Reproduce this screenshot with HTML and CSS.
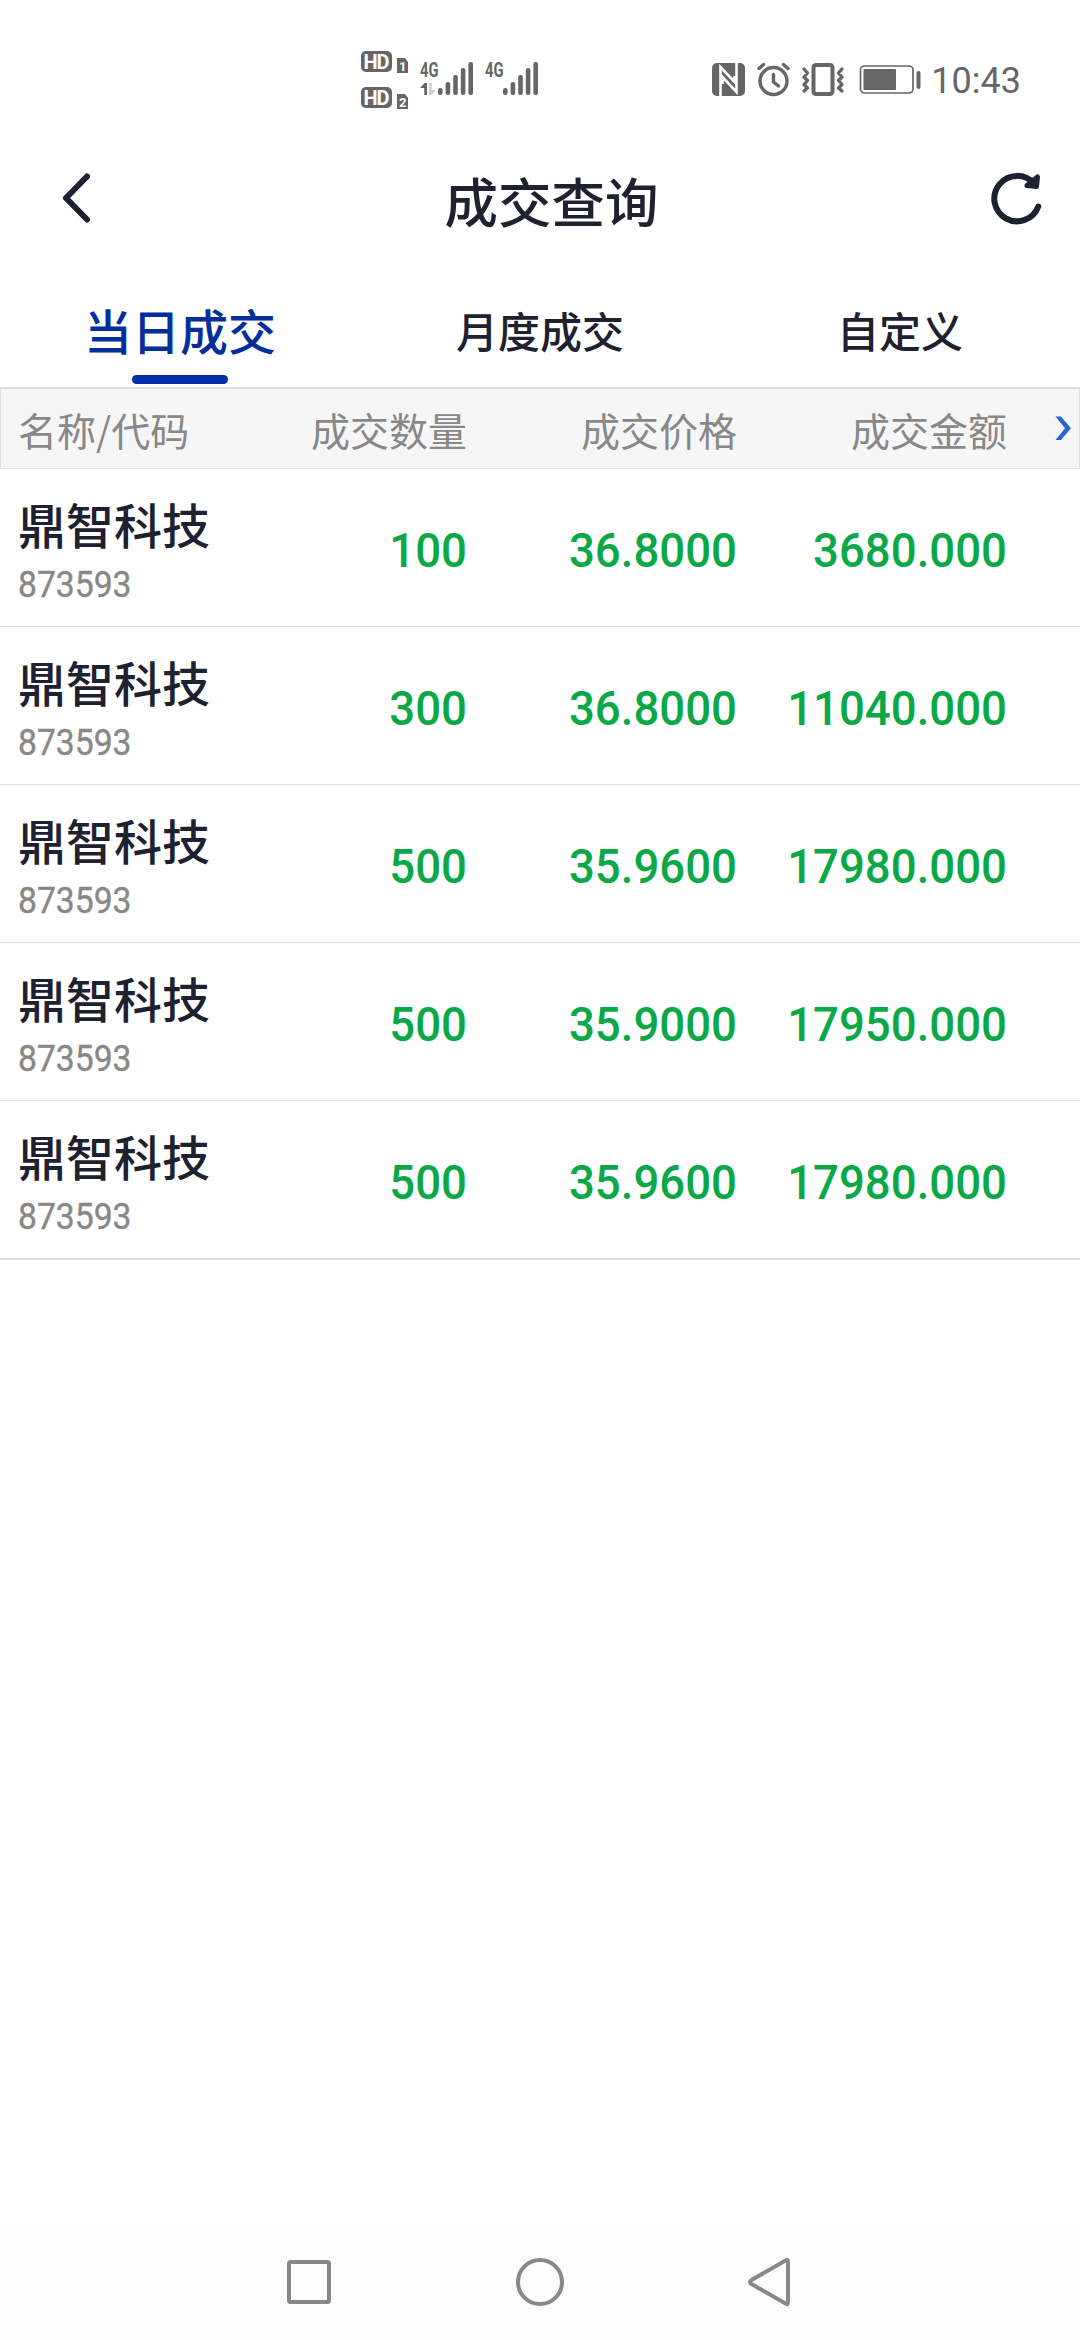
FILE: index.html
```html
<!DOCTYPE html>
<html lang="zh-CN">
<head>
<meta charset="utf-8">
<title>成交查询</title>
<link rel="stylesheet" href="styles.css">
</head>
<body>
<div class="screen">
  <div class="status">
    <svg class="signals" width="180" height="60" viewBox="360 50 180 60">
      <g class="ink">
        <rect x="361" y="51" width="31" height="21" rx="5"/>
        <rect x="361" y="87" width="31" height="21" rx="5"/>
        <path d="M397 58h8l3 4v11h-11zM397 94h8l3 4v11h-11z"/>
        <rect x="438" y="88" width="4.6" height="7" rx="2.2"/>
        <rect x="445.6" y="82" width="4.6" height="13" rx="2"/>
        <rect x="453.2" y="75" width="4.6" height="20" rx="2"/>
        <rect x="460.8" y="68" width="4.6" height="27" rx="2"/>
        <rect x="468.4" y="62" width="4.6" height="33" rx="2"/>
        <rect x="503" y="88" width="4.6" height="7" rx="2.2"/>
        <rect x="510.6" y="82" width="4.6" height="13" rx="2"/>
        <rect x="518.2" y="75" width="4.6" height="20" rx="2"/>
        <rect x="525.8" y="68" width="4.6" height="27" rx="2"/>
        <rect x="533.4" y="62" width="4.6" height="33" rx="2"/>
        <path d="M424.5 83h2.5v12h-2.8v-7h-4.2z"/>
      </g>
      <path fill="#d2d2d2" d="M429 83h2.8v7h4.4l-4.6 5h-2.6z"/>
      <text class="hd" x="363.5" y="68.5" textLength="26">HD</text>
      <text class="hd" x="363.5" y="104.500" textLength="26">HD</text>
      <text class="sim" x="399" y="71">1</text>
      <text class="sim" x="399" y="107">2</text>
      <text class="net" x="420" y="77" textLength="18.500" lengthAdjust="spacingAndGlyphs">4G</text>
      <text class="net" x="485" y="77" textLength="18.500" lengthAdjust="spacingAndGlyphs">4G</text>
    </svg>
    <svg class="system" width="212" height="36" viewBox="711 62 212 36">
      <rect class="ink" x="712" y="63" width="33" height="33" rx="5"/>
      <path fill="none" stroke="#fff" stroke-width="2.6" d="M720.500 96V67L734.500 82V76M736.500 63V92L722.500 77V84"/>
      <g fill="none" stroke="#666" stroke-width="3.400" stroke-linecap="round">
        <circle cx="773.500" cy="81" r="13.500"/>
        <path d="M773.500 74.500V82L778.500 86M759 68.500L763.500 64.500M788 68.500L783.500 64.500"/>
        <rect x="813.500" y="65" width="19" height="29" rx="2.500" stroke-width="4"/>
        <path stroke-linejoin="round" d="M804 69l3.500 4-3.500 4 3.500 3.500-3.500 4 3.500 3.500-3.500 3M842 69l-3.500 4 3.500 4-3.500 3.500 3.500 4-3.500 3.500 3.500 3"/>
        <rect x="860.500" y="66" width="52.500" height="27" rx="4" stroke-width="1.700"/>
      </g>
      <rect class="ink" x="863.500" y="69" width="32.500" height="21" rx="1"/>
      <rect class="ink" x="916.500" y="71" width="4" height="18" rx="2"/>
    </svg>
    <span class="clock">10:43</span>
  </div>

  <header class="titlebar">
    <svg width="60" height="60" viewBox="46 168 60 60"><path class="line" d="M87 176.500L66 198L87 219.500"/></svg>
    <h1>成交查询</h1>
    <svg width="60" height="60" viewBox="986 168 60 60"><path class="line" d="M1038.300 206.500A22.700 22.700 0 1 1 1034 183.500"/><path class="arrow" d="M1037.500 177L1036.500 186.500L1027 185.500Z"/></svg>
  </header>

  <nav class="tabs">
    <div class="tab active">当日成交</div>
    <div class="tab">月度成交</div>
    <div class="tab">自定义</div>
  </nav>

  <div class="columns grid">
    <span>名称/代码</span><span class="r">成交数量</span><span class="r">成交价格</span><span class="r">成交金额</span>
    <svg class="more" width="20" height="30" viewBox="1053 414 20 30"><path d="M1055.500 416.500h5.500L1071 428.300L1061 440h-5.500L1065 428.300Z" fill="#2468cc"/></svg>
  </div>

  <main>
    <div class="row grid"><div class="stock"><span class="name">鼎智科技</span><span class="code">873593</span></div><span class="num">100</span><span class="num">36.8000</span><span class="num">3680.000</span></div>
    <div class="row grid"><div class="stock"><span class="name">鼎智科技</span><span class="code">873593</span></div><span class="num">300</span><span class="num">36.8000</span><span class="num">11040.000</span></div>
    <div class="row grid"><div class="stock"><span class="name">鼎智科技</span><span class="code">873593</span></div><span class="num">500</span><span class="num">35.9600</span><span class="num">17980.000</span></div>
    <div class="row grid"><div class="stock"><span class="name">鼎智科技</span><span class="code">873593</span></div><span class="num">500</span><span class="num">35.9000</span><span class="num">17950.000</span></div>
    <div class="row grid"><div class="stock"><span class="name">鼎智科技</span><span class="code">873593</span></div><span class="num">500</span><span class="num">35.9600</span><span class="num">17980.000</span></div>
  </main>

  <footer class="sysnav">
    <svg width="504" height="50" viewBox="287 2257 504 50" fill="none" stroke="#888" stroke-width="4" stroke-linejoin="round">
      <rect x="289" y="2262" width="40" height="40" rx="1.500"/>
      <circle cx="540" cy="2282" r="22"/>
      <path d="M786 2260.300Q788 2259 788 2262V2302Q788 2305 786 2303.700L751.500 2284Q748.500 2282 751.500 2280Z"/>
    </svg>
  </footer>
</div>
</body>
</html>
```

FILE: styles.css
```css
* { box-sizing: border-box; }
body { margin: 0; background: #fff; font-family: "Noto Sans CJK SC", sans-serif; color: #1e2130; }
.screen { width: 1080px; height: 2340px; display: flex; flex-direction: column; }

.status { height: 120px; display: flex; align-items: flex-start; padding: 50px 59px 0 360px; }
.system { margin: 12px 0 0 171px; }
.clock { margin: 10px 0 0 auto; font: 36px/42px Roboto, sans-serif; color: #666; }
.ink, .net { fill: #666; }
.hd { font: 700 20px Roboto, sans-serif; fill: #fff; }
.sim { font: 700 13px Roboto, sans-serif; fill: #fff; }
.net { font: 700 20px Roboto, sans-serif; }

.titlebar { height: 156px; display: flex; align-items: center; justify-content: space-between; padding: 0 34px 0 46px; }
.titlebar h1 { margin: 4px 0 0 11px; font-size: 53.5px; line-height: 80px; font-weight: 500; }
.line { fill: none; stroke: #1e2130; stroke-width: 6; stroke-linecap: round; stroke-linejoin: round; }
.arrow { fill: #1e2130; stroke: #1e2130; stroke-width: 5; stroke-linejoin: round; }

.tabs { height: 111px; display: grid; grid-template-columns: repeat(3, 1fr); }
.tab { display: flex; flex-direction: column; align-items: center; font-size: 42px; line-height: 62px; font-weight: 500; padding-top: 23px; }
.tab.active { font-size: 48px; line-height: 70px; color: #042e9b; padding-top: 18px; }
.tab.active::after { content: ""; width: 96px; height: 9px; margin-top: 11px; border-radius: 5px; background: #002fa7; }

.grid { display: grid; grid-template-columns: 179px 270px 270px 270px 1fr; align-items: center; padding-left: 18px; }
.columns { height: 82px; padding-left: 17px; border: 1px solid #e0e0e0; border-top-width: 2px; background: #f6f6f6; color: #888; font-size: 39px; line-height: 58px; }
.columns span:first-child { white-space: nowrap; }
.r { text-align: right; }
.more { justify-self: end; margin-right: 6px; }

.row { height: 158px; border-bottom: 1px solid #e0e0e0; }
.row:last-child { height: 159px; border-bottom-width: 2px; }
.stock { display: flex; flex-direction: column; align-items: flex-start; padding-top: 3px; white-space: nowrap; }
.name { font-size: 48px; line-height: 64px; font-weight: 500; }
.code { margin-top: 8px; font: 36.5px/44px Roboto, sans-serif; -webkit-text-stroke: .4px #888; color: #888; transform: scaleX(.922); transform-origin: left; }
.num { padding-top: 7px; font: 500 49px/58px Roboto, sans-serif; color: #0ba848; text-align: right; transform: scaleX(.93); transform-origin: right; }

.sysnav { margin-top: auto; height: 116px; background: #fcfcfc; display: flex; justify-content: center; align-items: center; padding-right: 2px; }
```
